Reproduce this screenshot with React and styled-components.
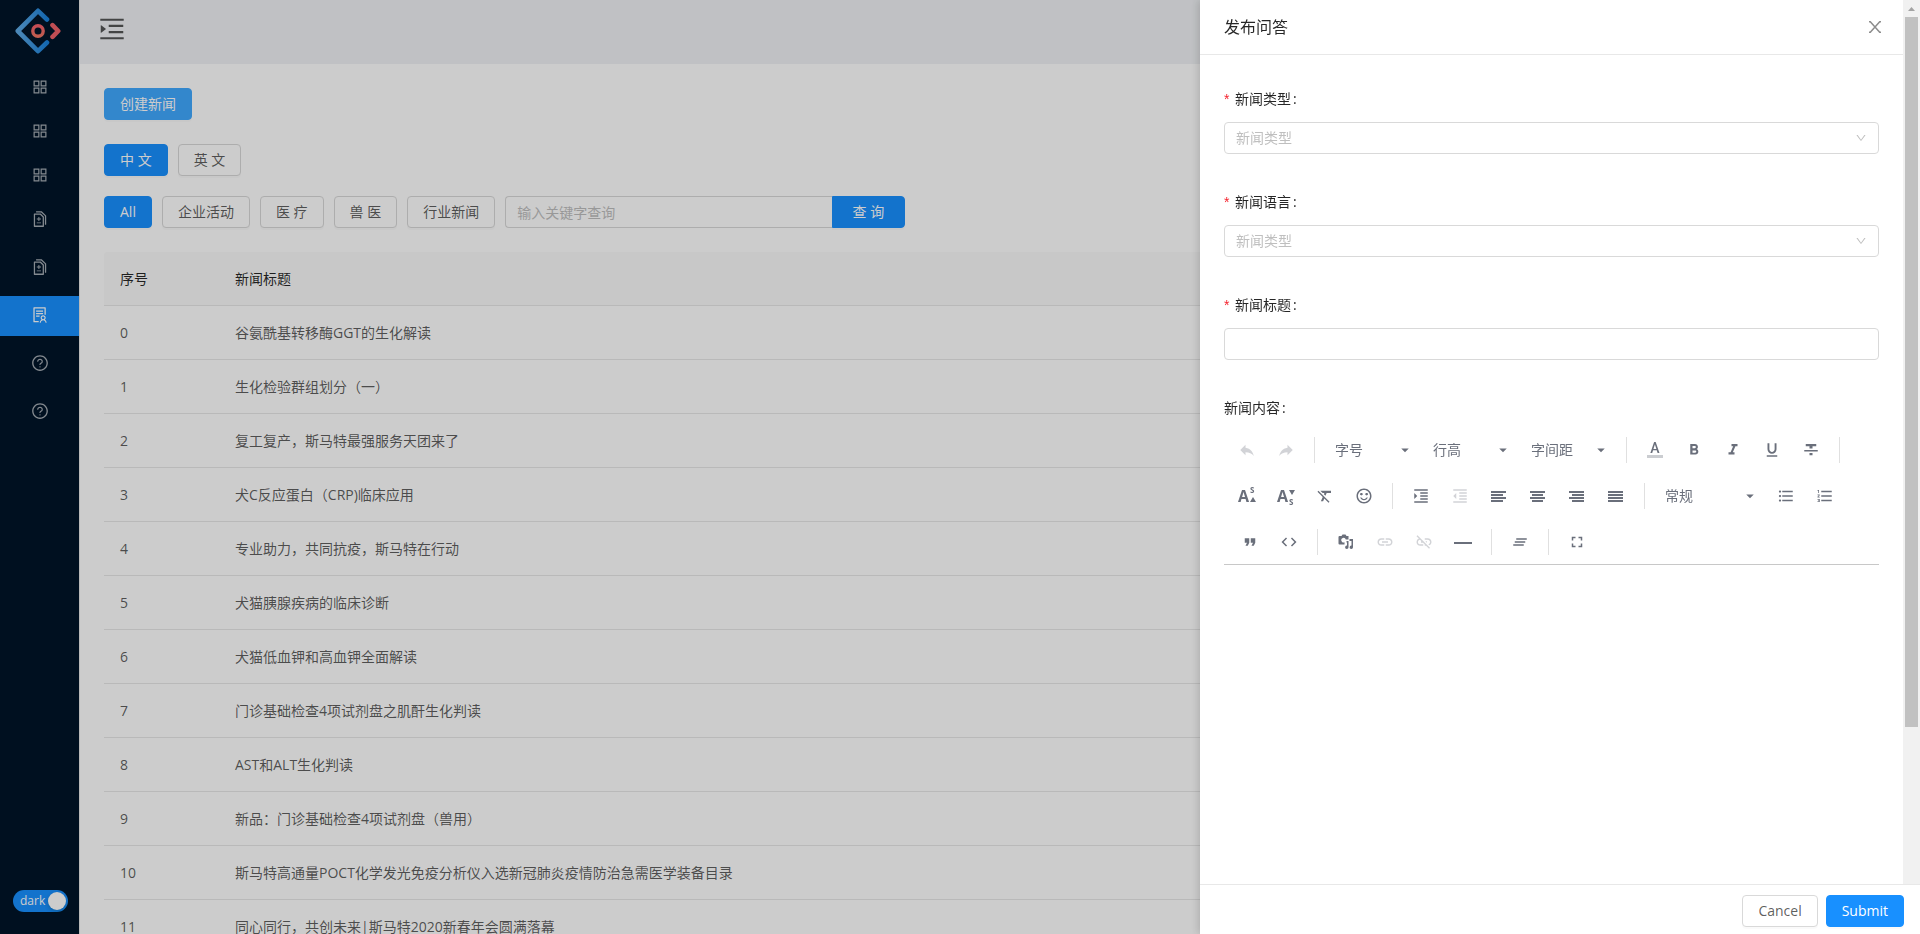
import React, { useState } from 'react'
import styled, { createGlobalStyle } from "styled-components";
import {
    AiOutlineAppstore,
    AiOutlineDiff,
    AiOutlineDown,
    AiOutlineMenuUnfold,
    AiOutlineQuestionCircle,
    AiOutlineSolution,
} from "react-icons/ai";
import {
    MdArrowDropDown,
    MdClearAll,
    MdCode,
    MdFormatBold,
    MdFormatClear,
    MdFormatIndentDecrease,
    MdFormatIndentIncrease,
    MdFormatItalic,
    MdFormatListBulleted,
    MdFormatListNumbered,
    MdFormatQuote,
    MdFormatStrikethrough,
    MdFormatUnderlined,
    MdFullscreen,
    MdLink,
    MdLinkOff,
    MdReply,
    MdSentimentSatisfiedAlt,
} from "react-icons/md";

const GlobalStyle = createGlobalStyle`
    * {
        box-sizing: border-box;
    }
    body {
        margin: 0;
        overflow: hidden;
        background: #fff;
        color: rgba(0, 0, 0, 0.65);
        font-family: "Open Sans", "Noto Sans CJK SC", sans-serif;
        font-size: 14px;
        line-height: 22px;
    }
    button, input, select, textarea {
        font: inherit;
        color: inherit;
    }
    svg {
        display: block;
        flex: none;
    }
`;

const Layout = styled.div`
    display: flex;
    height: 100vh;
    overflow: hidden;
`;

const Sider = styled.aside`
    display: flex;
    flex-direction: column;
    flex: none;
    width: 80px;
    background: #001529;
    border-right: 1px solid #e8e8e8;
`;

const LogoLink = styled.a`
    display: block;
    height: 68px;
    padding: 8px 15px;
`;

const Menu = styled.nav`
    display: flex;
    flex-direction: column;
`;

const MenuItem = styled.a`
    display: flex;
    align-items: center;
    justify-content: center;
    height: 40px;
    margin-bottom: ${props => props.$tight ? "4px" : "8px"};
    padding-bottom: 2px;
    font-size: 18px;
    color: ${props => props.$active ? "#fff" : "rgba(255, 255, 255, 0.65)"};
    background: ${props => props.$active ? "#1890ff" : "transparent"};
`;

const ThemeSwitch = styled.button`
    display: flex;
    align-items: center;
    justify-content: space-between;
    width: 55px;
    height: 22px;
    margin: auto 0 22px 13px;
    padding: 0 2px 0 7px;
    border: 0;
    border-radius: 11px;
    background: #1890ff;
    color: #fff;
    font-size: 12px;
    line-height: 22px;
`;

const Knob = styled.span`
    width: 18px;
    height: 18px;
    border-radius: 9px;
    background: #fff;
    box-shadow: 0 2px 4px rgba(0, 35, 11, 0.2);
`;

const Main = styled.div`
    flex: 1;
    min-width: 0;
`;

const Header = styled.header`
    display: flex;
    height: 64px;
    padding: 14px 17px;
    background: #f0f2f5;
`;

const Trigger = styled.button`
    width: 30px;
    height: 30px;
    padding: 0;
    border: 0;
    background: none;
    font-size: 30px;
`;

const Content = styled.main`
    display: flex;
    flex-direction: column;
    align-items: stretch;
    padding: 24px;
`;

const Bar = styled.div`
    display: flex;
    flex-wrap: wrap;
    gap: 10px;
    margin-bottom: ${props => props.$gap || "24px"};
`;

const Button = styled.button`
    height: 32px;
    padding: 0 15px;
    border: 1px solid #d9d9d9;
    border-radius: 4px;
    background: #fff;
    line-height: 28px;
    white-space: nowrap;
    box-shadow: 0 2px 0 rgba(0, 0, 0, 0.02);
`;

const PrimaryButton = styled(Button)`
    border-color: ${props => props.$focus ? "#40a9ff" : "#1890ff"};
    background: ${props => props.$focus ? "#40a9ff" : "#1890ff"};
    color: #fff;
`;

const Search = styled.form`
    display: flex;
    width: 400px;
`;

const SearchInput = styled.input`
    flex: 1;
    min-width: 0;
    height: 32px;
    padding: 0 11px;
    border: 1px solid #d9d9d9;
    border-right: 0;
    border-radius: 4px 0 0 4px;
    background: #fff;
    outline: none;
    &::placeholder {
        color: #bfbfbf;
    }
`;

const SearchButton = styled(PrimaryButton)`
    padding: 0 20px;
    border-radius: 0 4px 4px 0;
`;

const Table = styled.table`
    width: 100%;
    border-collapse: separate;
    border-spacing: 0;
    table-layout: fixed;
    line-height: 21px;
    text-align: left;
`;

const Th = styled.th`
    width: ${props => props.$width || "auto"};
    padding: 16px;
    border-bottom: 1px solid #e8e8e8;
    background: #fafafa;
    color: rgba(0, 0, 0, 0.85);
    font-weight: 400;
    &:first-child {
        border-top-left-radius: 4px;
    }
`;

const Td = styled.td`
    padding: 16px;
    border-bottom: 1px solid #e8e8e8;
`;

const Mask = styled.div`
    position: fixed;
    inset: 0;
    background: rgba(0, 0, 0, 0.2);
`;

const Drawer = styled.section`
    position: fixed;
    top: 0;
    right: 0;
    bottom: 0;
    display: flex;
    flex-direction: column;
    width: 720px;
    max-width: 100%;
    background: #fff;
    box-shadow: -2px 0 8px rgba(0, 0, 0, 0.15);
`;

const DrawerScroll = styled.div`
    display: flex;
    flex: 1;
    min-height: 0;
`;

const DrawerPage = styled.div`
    flex: 1;
    min-width: 0;
    overflow: hidden;
`;

const DrawerHeader = styled.div`
    display: flex;
    align-items: center;
    justify-content: space-between;
    padding: 16px 20px 16px 24px;
    border-bottom: 1px solid #e8e8e8;
`;

const DrawerTitle = styled.h2`
    margin: 0;
    color: rgba(0, 0, 0, 0.85);
    font-size: 16px;
    font-weight: 400;
    line-height: 22px;
`;

const CloseButton = styled.button`
    padding: 0;
    border: 0;
    background: none;
    color: rgba(0, 0, 0, 0.45);
`;

const DrawerForm = styled.form`
    padding: 24px;
`;

const FormItem = styled.div`
    margin-bottom: 28px;
`;

const Label = styled.label`
    display: block;
    padding: 9px 0 12px;
    color: rgba(0, 0, 0, 0.85);
`;

const Required = styled.span`
    display: inline-block;
    width: 11px;
    color: #f5222d;
    font-family: "Liberation Sans", sans-serif;
`;

const Colon = styled.span`
    margin-left: 2px;
`;

const SelectBox = styled.div`
    position: relative;
    color: #bfbfbf;
    & > svg {
        position: absolute;
        top: 10px;
        right: 12px;
        font-size: 12px;
        pointer-events: none;
    }
`;

const Select = styled.select`
    display: block;
    width: 100%;
    height: 32px;
    padding: 0 30px 0 11px;
    border: 1px solid #d9d9d9;
    border-radius: 4px;
    background: #fff;
    appearance: none;
    outline: none;
`;

const TextInput = styled.input`
    display: block;
    width: 100%;
    height: 32px;
    padding: 0 11px;
    border: 1px solid #d9d9d9;
    border-radius: 4px;
    background: #fff;
    outline: none;
`;

const Toolbar = styled.div`
    display: flex;
    flex-direction: column;
    gap: 10px;
    padding: 1px 5px 4px;
    border-bottom: 1px solid #c8c8c8;
    color: #6a6f7b;
`;

const ToolRow = styled.div`
    display: flex;
    flex-wrap: wrap;
    align-items: center;
    gap: 3px;
    padding-left: ${props => props.$indent ? "3px" : "0"};
`;

const Tool = styled.button`
    display: flex;
    align-items: center;
    justify-content: center;
    width: 36px;
    height: 36px;
    padding: 0;
    border: 0;
    background: none;
    font-size: 18px;
    &:disabled {
        opacity: 0.3;
    }
`;

const Divider = styled.span`
    width: 1px;
    height: 26px;
    margin: 0 7px;
    background: #e0e0e0;
`;

const ToolSelectBox = styled.div`
    position: relative;
    width: ${props => props.$width};
    & > svg {
        position: absolute;
        top: 9px;
        right: 6px;
        font-size: 18px;
        pointer-events: none;
    }
`;

const ToolSelect = styled.select`
    display: block;
    width: 100%;
    height: 36px;
    padding: 0 24px 0 10px;
    border: 0;
    background: none;
    appearance: none;
    outline: none;
`;

const EditorArea = styled.textarea`
    display: block;
    width: 100%;
    height: 300px;
    padding: 15px;
    border: 0;
    background: none;
    outline: none;
    resize: none;
`;

const ScrollTrack = styled.div`
    flex: none;
    width: 17px;
    padding: 7px 2px 0;
    background: #f1f1f1;
`;

const ScrollArrow = styled.div`
    width: 7px;
    height: 4px;
    margin: 0 auto 6px;
    background: #a3a3a3;
    clip-path: polygon(50% 0, 100% 100%, 0 100%);
`;

const ScrollThumb = styled.div`
    height: 81%;
    background: #c1c1c1;
`;

const DrawerFooter = styled.footer`
    display: flex;
    justify-content: flex-end;
    gap: 8px;
    padding: 10px 16px 7px;
    border-top: 1px solid #e8e8e8;
    background: #fff;
`;

const menu = [
    { name: "首页", icon: AiOutlineAppstore, tight: true },
    { name: "产品", icon: AiOutlineAppstore, tight: true },
    { name: "分类", icon: AiOutlineAppstore, tight: true },
    { name: "文件", icon: AiOutlineDiff },
    { name: "资料", icon: AiOutlineDiff },
    { name: "新闻", icon: AiOutlineSolution, active: true },
    { name: "问答", icon: AiOutlineQuestionCircle },
    { name: "帮助", icon: AiOutlineQuestionCircle },
];

const types = ["企业活动", "医 疗", "兽 医", "行业新闻"];

const news = [
    "谷氨酰基转移酶GGT的生化解读",
    "生化检验群组划分（一）",
    "复工复产，斯马特最强服务天团来了",
    "犬C反应蛋白（CRP)临床应用",
    "专业助力，共同抗疫，斯马特在行动",
    "犬猫胰腺疾病的临床诊断",
    "犬猫低血钾和高血钾全面解读",
    "门诊基础检查4项试剂盘之肌酐生化判读",
    "AST和ALT生化判读",
    "新品：门诊基础检查4项试剂盘（兽用）",
    "斯马特高通量POCT化学发光免疫分析仪入选新冠肺炎疫情防治急需医学装备目录",
    "同心同行，共创未来|斯马特2020新春年会圆满落幕",
];

const Logo = () => (
    <svg width="46" height="46" viewBox="0 0 46 46" fill="none" strokeLinecap="round" strokeLinejoin="round">
        <defs>
            <linearGradient id="logoBlue" x1="0" y1="0" x2="1" y2="0">
                <stop offset="0" stopColor="#5fabe6" />
                <stop offset="1" stopColor="#1a82dc" />
            </linearGradient>
            <linearGradient id="logoRed" x1="0" y1="0" x2="0" y2="1">
                <stop offset="0" stopColor="#f5606a" />
                <stop offset="1" stopColor="#f07565" />
            </linearGradient>
        </defs>
        <path d="M32 11.5L23 2.8L2.8 23L23 43.2L32 34.5" stroke="url(#logoBlue)" strokeWidth="4.6" />
        <path d="M37.5 17.2L43.2 23L37.5 28.8" stroke="#f0626a" strokeWidth="4.6" />
        <circle cx="23" cy="23" r="5.2" stroke="url(#logoRed)" strokeWidth="3.4" />
    </svg>
)

const CloseIcon = () => (
    <svg width="16" height="16" viewBox="0 0 16 16" fill="none" stroke="currentColor" strokeWidth="1.5">
        <path d="M2 2.7H3.300L12.700 13.300H14M14 2.700H12.700L3.300 13.300H2" />
    </svg>
)

const bars = {
    left: [[1, 15], [1, 12], [1, 15], [1, 12]],
    center: [[1, 15], [3, 11], [1, 15], [3, 11]],
    right: [[1, 15], [4, 12], [1, 15], [4, 12]],
    justify: [[1, 15], [1, 15], [1, 15], [1, 15]],
};

const AlignIcon = ({ type }) => (
    <svg width="18" height="18" viewBox="0 0 18 18" fill="currentColor">
        {bars[type].map(([x, width], i) => <rect key={i} x={x} y={4 + i * 3} width={width} height="2" />)}
    </svg>
)

const ColorIcon = () => (
    <svg width="18" height="18" viewBox="0 0 18 18" fill="currentColor">
        <text x="9" y="12" textAnchor="middle" fontSize="14" fontWeight="500" fontFamily="Roboto, sans-serif">A</text>
        <rect x="1" y="14" width="16" height="3" opacity="0.35" />
    </svg>
)

const ScriptIcon = ({ sub }) => (
    <svg width="18" height="30" viewBox="0 0 18 30" fill="currentColor">
        <text x="0" y="21" fontSize="16" fontWeight="700" fontFamily="Open Sans, sans-serif">A</text>
        <text x="12" y={sub ? 24 : 12} fontSize="8" fontWeight="700" fontFamily="Open Sans, sans-serif">S</text>
        <path d={sub ? "M12 9H18L15 14Z" : "M12 21H18L15 16Z"} />
    </svg>
)

const MediaIcon = () => (
    <svg width="18" height="18" viewBox="0 0 18 18" fill="currentColor">
        <path fillRule="evenodd" d="M2.500 3H4.500L5.500 1.500H8.500L9.500 3H11.500V6.500H8.800A2.300 2.300 0 1 0 7.500 9.300V11.500H2.500Q1.500 11.500 1.500 10.500V4Q1.500 3 2.500 3Z" />
        <path d="M12.500 6H16V14.300A1.700 1.700 0 1 1 14.500 12.600V8H12.500Z" />
        <path d="M9.500 8H11.500V14.300A1.700 1.700 0 1 1 10 12.600V9.500H9.500Z" />
    </svg>
)

const HrIcon = () => (
    <svg width="18" height="18" viewBox="0 0 18 18" fill="currentColor">
        <rect x="0" y="9" width="18" height="2" />
    </svg>
)

const RedoIcon = () => (
    <svg width="18" height="18" viewBox="0 0 24 24" fill="currentColor">
        <path transform="matrix(-1 0 0 1 24 0)" d="M10 9V5l-7 7 7 7v-4.1c5 0 8.500 1.600 11 5.100-1-5-4-10-11-11z" />
    </svg>
)

const ToolDropdown = ({ text, width = "95px" }) => (
    <ToolSelectBox $width={width}>
        <ToolSelect aria-label={text}>
            <option>{text}</option>
        </ToolSelect>
        <MdArrowDropDown />
    </ToolSelectBox>
)

const SelectItem = ({ id, label }) => (
    <FormItem>
        <Label htmlFor={id}><Required>*</Required>{label}<Colon>:</Colon></Label>
        <SelectBox>
            <Select id={id}>
                <option>新闻类型</option>
            </Select>
            <AiOutlineDown />
        </SelectBox>
    </FormItem>
)

const EditorToolbar = () => (
    <Toolbar>
        <ToolRow>
            <Tool type="button" aria-label="撤销" disabled><MdReply /></Tool>
            <Tool type="button" aria-label="重做" disabled><RedoIcon /></Tool>
            <Divider />
            <ToolDropdown text="字号" />
            <ToolDropdown text="行高" />
            <ToolDropdown text="字间距" />
            <Divider />
            <Tool type="button" aria-label="文字颜色"><ColorIcon /></Tool>
            <Tool type="button" aria-label="加粗"><MdFormatBold /></Tool>
            <Tool type="button" aria-label="斜体"><MdFormatItalic /></Tool>
            <Tool type="button" aria-label="下划线"><MdFormatUnderlined /></Tool>
            <Tool type="button" aria-label="删除线"><MdFormatStrikethrough /></Tool>
            <Divider />
        </ToolRow>
        <ToolRow>
            <Tool type="button" aria-label="上标"><ScriptIcon /></Tool>
            <Tool type="button" aria-label="下标"><ScriptIcon sub /></Tool>
            <Tool type="button" aria-label="清除样式"><MdFormatClear /></Tool>
            <Tool type="button" aria-label="表情"><MdSentimentSatisfiedAlt /></Tool>
            <Divider />
            <Tool type="button" aria-label="增加缩进"><MdFormatIndentIncrease /></Tool>
            <Tool type="button" aria-label="减少缩进" disabled><MdFormatIndentDecrease /></Tool>
            <Tool type="button" aria-label="居左"><AlignIcon type="left" /></Tool>
            <Tool type="button" aria-label="居中"><AlignIcon type="center" /></Tool>
            <Tool type="button" aria-label="居右"><AlignIcon type="right" /></Tool>
            <Tool type="button" aria-label="两端"><AlignIcon type="justify" /></Tool>
            <Divider />
            <ToolDropdown text="常规" width="110px" />
            <Tool type="button" aria-label="无序列表"><MdFormatListBulleted /></Tool>
            <Tool type="button" aria-label="有序列表"><MdFormatListNumbered /></Tool>
        </ToolRow>
        <ToolRow $indent>
            <Tool type="button" aria-label="引用"><MdFormatQuote /></Tool>
            <Tool type="button" aria-label="代码"><MdCode /></Tool>
            <Divider />
            <Tool type="button" aria-label="媒体"><MediaIcon /></Tool>
            <Tool type="button" aria-label="链接" disabled><MdLink /></Tool>
            <Tool type="button" aria-label="清除链接" disabled><MdLinkOff /></Tool>
            <Tool type="button" aria-label="水平线"><HrIcon /></Tool>
            <Divider />
            <Tool type="button" aria-label="清除内容"><MdClearAll /></Tool>
            <Divider />
            <Tool type="button" aria-label="全屏"><MdFullscreen /></Tool>
        </ToolRow>
    </Toolbar>
)

const App = () => {
    const [title, setTitle] = useState("");
    const [keyword, setKeyword] = useState("");

    return (
        <>
            <GlobalStyle />
            <Layout>
                <Sider>
                    <LogoLink href="#" aria-label="logo"><Logo /></LogoLink>
                    <Menu>
                        {menu.map(({ name, icon: Icon, tight, active }) =>
                            <MenuItem key={name} href="#" aria-label={name} $tight={tight} $active={active}>
                                <Icon />
                            </MenuItem>
                        )}
                    </Menu>
                    <ThemeSwitch type="button" role="switch" aria-checked="true">
                        dark<Knob />
                    </ThemeSwitch>
                </Sider>
                <Main>
                    <Header>
                        <Trigger type="button" aria-label="展开菜单"><AiOutlineMenuUnfold /></Trigger>
                    </Header>
                    <Content>
                        <Bar>
                            <PrimaryButton type="button" $focus>创建新闻</PrimaryButton>
                        </Bar>
                        <Bar $gap="20px">
                            <PrimaryButton type="button">中 文</PrimaryButton>
                            <Button type="button">英 文</Button>
                        </Bar>
                        <Bar>
                            <PrimaryButton type="button">All</PrimaryButton>
                            {types.map((v) => <Button type="button" key={v}>{v}</Button>)}
                            <Search onSubmit={(e) => e.preventDefault()}>
                                <SearchInput
                                    aria-label="关键字"
                                    placeholder="输入关键字查询"
                                    value={keyword}
                                    onChange={(e) => setKeyword(e.target.value)}
                                />
                                <SearchButton type="submit">查 询</SearchButton>
                            </Search>
                        </Bar>
                        <Table>
                            <thead>
                                <tr>
                                    <Th $width="115px">序号</Th>
                                    <Th>新闻标题</Th>
                                </tr>
                            </thead>
                            <tbody>
                                {news.map((v, i) =>
                                    <tr key={i}>
                                        <Td>{i}</Td>
                                        <Td>{v}</Td>
                                    </tr>
                                )}
                            </tbody>
                        </Table>
                    </Content>
                </Main>
            </Layout>
            <Mask />
            <Drawer role="dialog" aria-labelledby="drawer-title">
                <DrawerScroll>
                    <DrawerPage>
                        <DrawerHeader>
                            <DrawerTitle id="drawer-title">发布问答</DrawerTitle>
                            <CloseButton type="button" aria-label="关闭"><CloseIcon /></CloseButton>
                        </DrawerHeader>
                        <DrawerForm id="news-form" onSubmit={(e) => e.preventDefault()}>
                            <SelectItem id="news-type" label="新闻类型" />
                            <SelectItem id="news-lang" label="新闻语言" />
                            <FormItem>
                                <Label htmlFor="news-title"><Required>*</Required>新闻标题<Colon>:</Colon></Label>
                                <TextInput id="news-title" value={title} onChange={(e) => setTitle(e.target.value)} />
                            </FormItem>
                            <FormItem>
                                <Label htmlFor="news-content">新闻内容<Colon>:</Colon></Label>
                                <EditorToolbar />
                                <EditorArea id="news-content" />
                            </FormItem>
                        </DrawerForm>
                    </DrawerPage>
                    <ScrollTrack>
                        <ScrollArrow />
                        <ScrollThumb />
                    </ScrollTrack>
                </DrawerScroll>
                <DrawerFooter>
                    <Button type="button">Cancel</Button>
                    <PrimaryButton type="submit" form="news-form">Submit</PrimaryButton>
                </DrawerFooter>
            </Drawer>
        </>
    )
}


export default App;
